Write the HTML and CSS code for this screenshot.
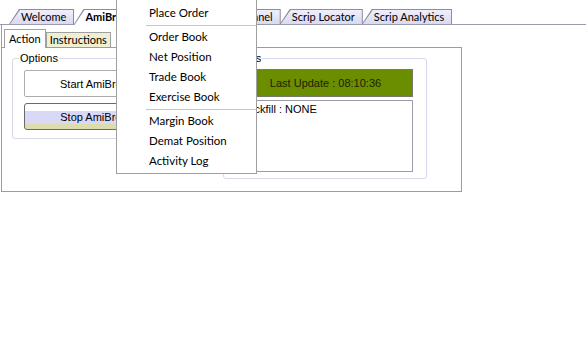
FILE: index.html
```html
<!DOCTYPE html>
<html>
<head>
    <meta charset="utf-8">
    <title>AmiBroker</title>
    <link rel="stylesheet" href="styles.css">
</head>
<body>
    <div class="app">
        <div class="tabstrip">
            <div class="tab"><span>Welcome</span></div>
            <div class="tab active"><span>AmiBroker</span></div>
            <div class="tab"><span>Markets</span></div>
            <div class="tab"><span>Order Panel</span></div>
            <div class="tab"><span>Scrip Locator</span></div>
            <div class="tab"><span>Scrip Analytics</span></div>
        </div>

        <div class="page">
            <div class="subtabs">
                <div class="subtab active">Action</div>
                <div class="subtab">Instructions</div>
            </div>
            <div class="subpage">
                <fieldset class="group options">
                    <legend>Options</legend>
                    <button class="btn">Start AmiBroker</button>
                    <button class="btn stop">Stop AmiBroker</button>
                </fieldset>
                <fieldset class="group status">
                    <legend>Status</legend>
                    <div class="update">Last Update : 08:10:36</div>
                    <div class="log">Backfill : NONE</div>
                </fieldset>
            </div>
        </div>

        <!-- context menu opened over the tabs -->
        <div class="menu">
            <div class="menu-item">Place Order</div>
            <div class="menu-sep"></div>
            <div class="menu-item">Order Book</div>
            <div class="menu-item">Net Position</div>
            <div class="menu-item">Trade Book</div>
            <div class="menu-item">Exercise Book</div>
            <div class="menu-sep"></div>
            <div class="menu-item">Margin Book</div>
            <div class="menu-item">Demat Position</div>
            <div class="menu-item">Activity Log</div>
        </div>
    </div>
</body>
</html>
```

FILE: styles.css
```css
* {
    box-sizing: border-box;
}
body {
    margin: 0;
    background-color: white;
    font-family: "Liberation Sans", Arial, sans-serif;
    font-size: 11px;
    color: #000;
}
.app {
    position: relative;
    width: 586px;
    height: 350px;
}

/* top tab strip */
.tabstrip {
    display: flex;
    align-items: flex-end;
    height: 25px;
    padding-left: 10px;
    border-bottom: 1px solid #9a9aae;
}
.tab {
    position: relative;
    height: 15px;
    margin-left: -1px;
    padding: 0 8px 0 12px;
    background-color: #8c8ca0;
    clip-path: polygon(0 100%, 10px 0, 100% 0, 100% 100%);
    font-family: Lato, "Liberation Sans", sans-serif;
    font-size: 11px;
    line-height: 15px;
    white-space: nowrap;
}
.tab::before {
    content: '';
    position: absolute;
    top: 1px;
    left: 1px;
    right: 1px;
    bottom: 0;
    background: linear-gradient(#efeffb, #d9d9f0);
    clip-path: polygon(0 100%, 10px 0, 100% 0, 100% 100%);
}
.tab span {
    position: relative;
}
.tab.active {
    z-index: 1;
    height: 16px;
    margin-bottom: -1px;
    font-weight: bold;
}
.tab.active::before {
    background: white;
}

/* main tab page */
.page {
    width: 462px;
    padding-left: 1px;
}
.subtabs {
    display: flex;
    align-items: flex-end;
    height: 22px;
    padding: 4px 0 0 2px;
    border-left: 1px solid #9a9aae;
}
.subtab {
    height: 15px;
    padding: 0 3px;
    border: 1px solid #a0a0a0;
    border-bottom: 0;
    background-color: #f0efd2;
    font-family: Lato, "Liberation Sans", sans-serif;
    font-size: 11px;
    line-height: 14px;
}
.subtab.active {
    position: relative;
    z-index: 1;
    height: 19px;
    margin-bottom: -1px;
    padding: 0 4px 0 4px;
    background-color: white;
    line-height: 17px;
}
.subpage {
    display: flex;
    align-items: flex-start;
    height: 145px;
    padding: 4px 0 0 10px;
    border: 1px solid #9a9aae;
}

/* group boxes */
.group {
    margin: 0;
    min-width: 0;
    border: 1px solid #d8d8ea;
    border-radius: 3px;
}
.group legend {
    padding: 0 1px;
    font-size: 11px;
}
.options {
    width: 189px;
    padding: 6px 0 8px 11px;
}
.options legend {
    margin-left: -5px;
}
.status {
    width: 204px;
    margin-left: 22px;
    padding: 5px 13px 6px 14px;
}
.status legend {
    margin-left: -9px;
}
.btn {
    display: block;
    width: 149px;
    height: 27px;
    padding: 0;
    border: 1px solid #adadad;
    border-radius: 2px;
    background-color: white;
    font-family: "Liberation Sans", Arial, sans-serif;
    font-size: 11px;
    color: #000;
}
.btn.stop {
    margin-top: 6px;
    border-color: #6a6a6a;
    border-radius: 3px;
    background: linear-gradient(white 0, white 28%, #d9d9f6 28%, #d9d9f6 80%, #dcdcae 80%);
}
.update {
    height: 28px;
    border: 1px solid #767a66;
    background-color: #6b8d00;
    color: #1e1e00;
    text-align: center;
    line-height: 26px;
}
.log {
    height: 72px;
    margin-top: 3px;
    padding: 2px 2px;
    border: 1px solid #9c9cac;
}

/* context menu */
.menu {
    position: absolute;
    top: -1px;
    left: 116px;
    z-index: 5;
    width: 141px;
    padding: 3px 0 2px;
    border: 1px solid #a0a0a0;
    background-color: white;
    font-family: Lato, "Liberation Sans", sans-serif;
    font-size: 11.5px;
}
.menu-item {
    height: 20px;
    padding-left: 32px;
    line-height: 20px;
}
.menu-sep {
    height: 4px;
    margin-left: 29px;
    padding-top: 2px;
}
.menu-sep::after {
    content: '';
    display: block;
    border-top: 1px solid #c5c5c5;
}
```
